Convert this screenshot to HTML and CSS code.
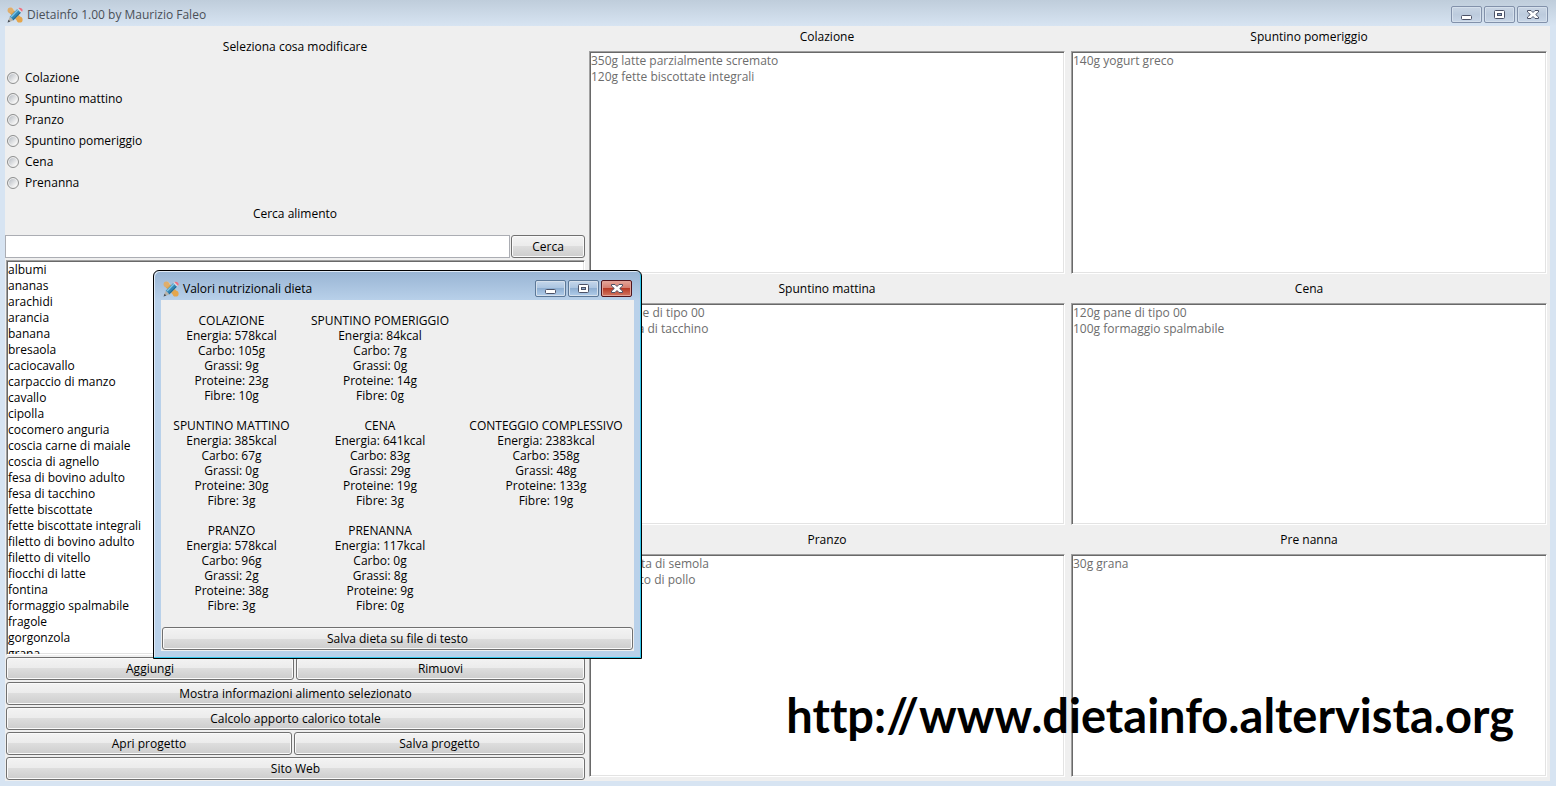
FILE: index.html
```html
<!DOCTYPE html>
<html lang="it">
<head>
<meta charset="utf-8">
<title>Dietainfo 1.00 by Maurizio Faleo</title>
<link rel="stylesheet" href="styles.css">
</head>
<body>
<svg class="defs" aria-hidden="true">
  <symbol id="app" viewBox="0 0 16 16">
    <path d="M.8 4.400 4.400.8 15.200 11.600 11.600 15.200Z" fill="#dda657"/>
    <path d="M4.400.8 7 3.400M5.800 3.600 4.800 4.600" stroke="#f3cd8b" fill="none"/>
    <circle cx="12.700" cy="12.700" r="2.900" fill="#e5a64c"/>
    <circle cx="3.300" cy="3.300" r="2.700" fill="#dfae6c"/>
    <path d="M2.700 9.700 10.300 2.100 14 5.800 6.400 13.400Z" fill="#3387b5"/>
    <path d="M4 10 11.200 2.800" stroke="#82c6e4" stroke-width="1.400"/>
    <path d="M5.900 12.800 13.400 5.300" stroke="#1d5f88"/>
    <path d="M2.700 9.700 6.400 13.400.6 15.400Z" fill="#b9b3aa"/>
    <path d="M1.500 12.800 3.300 14.600.6 15.400Z" fill="#464d55"/>
    <path d="M10.300 2.100 11.300 1.100 15 4.800 14 5.800Z" fill="#d9dde2"/>
    <path d="M11.300 1.100Q13 0 14.700 1.500T15 4.800Z" fill="#f0707f"/>
  </symbol>
  <symbol id="min" viewBox="0 0 12 10"><rect x="0.500" y="5.500" width="10" height="4" rx="1" fill="#fff" stroke="#4b5166"/></symbol>
  <symbol id="max" viewBox="0 0 12 10"><rect x="0.500" y="0.500" width="10" height="8" rx="1" fill="#fff" stroke="#4b5166"/><rect x="3.500" y="3.500" width="4" height="2" fill="#8fa9c9" stroke="#4b5166"/></symbol>
  <symbol id="close" viewBox="0 0 12 10"><path d="M.5.5H4L6 2.500 8 .5H11.500V2L8.700 4.500 11.500 7V8.500H8L6 6.500 4 8.500H.5V7L3.300 4.500.5 2Z" fill="#fff" stroke="#4b5166"/></symbol>
</svg>
<div class="window">
  <header class="titlebar">
    <svg class="appicon"><use href="#app"/></svg>
    <h1 class="title">Dietainfo 1.00 by Maurizio Faleo</h1>
    <div class="controls">
      <button class="ctl" aria-label="Riduci"><svg><use href="#min"/></svg></button>
      <button class="ctl" aria-label="Ingrandisci"><svg><use href="#max"/></svg></button>
      <button class="ctl" aria-label="Chiudi"><svg><use href="#close"/></svg></button>
    </div>
  </header>
  <main class="client">
    <section class="side">
      <h2 class="heading">Seleziona cosa modificare</h2>
      <div class="radios">
        <label class="radio"><input type="radio" name="pasto">Colazione</label>
        <label class="radio"><input type="radio" name="pasto">Spuntino mattino</label>
        <label class="radio"><input type="radio" name="pasto">Pranzo</label>
        <label class="radio"><input type="radio" name="pasto">Spuntino pomeriggio</label>
        <label class="radio"><input type="radio" name="pasto">Cena</label>
        <label class="radio"><input type="radio" name="pasto">Prenanna</label>
      </div>
      <label class="heading" for="cerca">Cerca alimento</label>
      <div class="search"><input class="field" id="cerca" type="text"><button class="btn">Cerca</button></div>
      <div class="listwrap">
        <ul class="box list">
          <li>albumi</li><li>ananas</li><li>arachidi</li><li>arancia</li><li>banana</li><li>bresaola</li><li>caciocavallo</li><li>carpaccio di manzo</li><li>cavallo</li><li>cipolla</li><li>cocomero anguria</li><li>coscia carne di maiale</li><li>coscia di agnello</li><li>fesa di bovino adulto</li><li>fesa di tacchino</li><li>fette biscottate</li><li>fette biscottate integrali</li><li>filetto di bovino adulto</li><li>filetto di vitello</li><li>fiocchi di latte</li><li>fontina</li><li>formaggio spalmabile</li><li>fragole</li><li>gorgonzola</li><li>grana</li>
        </ul>
      </div>
      <div class="actions">
        <div class="pair"><button class="btn">Aggiungi</button><button class="btn">Rimuovi</button></div>
        <button class="btn">Mostra informazioni alimento selezionato</button>
        <button class="btn">Calcolo apporto calorico totale</button>
        <div class="pair project"><button class="btn">Apri progetto</button><button class="btn">Salva progetto</button></div>
        <button class="btn">Sito Web</button>
      </div>
    </section>
    <section class="meals">
      <div class="meal"><h2>Colazione</h2><ul class="box"><li>350g latte parzialmente scremato</li><li>120g fette biscottate integrali</li></ul></div>
      <div class="meal"><h2>Spuntino pomeriggio</h2><ul class="box"><li>140g yogurt greco</li></ul></div>
      <div class="meal"><h2>Spuntino mattina</h2><ul class="box"><li>120g pane di tipo 00</li><li>100g fesa di tacchino</li></ul></div>
      <div class="meal"><h2>Cena</h2><ul class="box"><li>120g pane di tipo 00</li><li>100g formaggio spalmabile</li></ul></div>
      <div class="meal"><h2>Pranzo</h2><ul class="box"><li>120g pasta di semola</li><li>150g petto di pollo</li></ul></div>
      <div class="meal"><h2>Pre nanna</h2><ul class="box"><li>30g grana</li></ul></div>
    </section>
  </main>
  <p class="site">http://www.dietainfo.altervista.org</p>
  <section class="dialog" role="dialog" aria-labelledby="dlg">
    <header class="dialogbar">
      <svg class="appicon"><use href="#app"/></svg>
      <h2 class="title" id="dlg">Valori nutrizionali dieta</h2>
      <div class="controls">
        <button class="ctl" aria-label="Riduci"><svg><use href="#min"/></svg></button>
        <button class="ctl" aria-label="Ingrandisci"><svg><use href="#max"/></svg></button>
        <button class="ctl red" aria-label="Chiudi"><svg><use href="#close"/></svg></button>
      </div>
    </header>
    <div class="dialogbody">
      <div class="values">
        <div class="value"><h3>COLAZIONE</h3><p>Energia: 578kcal</p><p>Carbo: 105g</p><p>Grassi: 9g</p><p>Proteine: 23g</p><p>Fibre: 10g</p></div>
        <div class="value"><h3>SPUNTINO POMERIGGIO</h3><p>Energia: 84kcal</p><p>Carbo: 7g</p><p>Grassi: 0g</p><p>Proteine: 14g</p><p>Fibre: 0g</p></div>
        <div class="value first"><h3>SPUNTINO MATTINO</h3><p>Energia: 385kcal</p><p>Carbo: 67g</p><p>Grassi: 0g</p><p>Proteine: 30g</p><p>Fibre: 3g</p></div>
        <div class="value"><h3>CENA</h3><p>Energia: 641kcal</p><p>Carbo: 83g</p><p>Grassi: 29g</p><p>Proteine: 19g</p><p>Fibre: 3g</p></div>
        <div class="value"><h3>CONTEGGIO COMPLESSIVO</h3><p>Energia: 2383kcal</p><p>Carbo: 358g</p><p>Grassi: 48g</p><p>Proteine: 133g</p><p>Fibre: 19g</p></div>
        <div class="value first"><h3>PRANZO</h3><p>Energia: 578kcal</p><p>Carbo: 96g</p><p>Grassi: 2g</p><p>Proteine: 38g</p><p>Fibre: 3g</p></div>
        <div class="value"><h3>PRENANNA</h3><p>Energia: 117kcal</p><p>Carbo: 0g</p><p>Grassi: 8g</p><p>Proteine: 9g</p><p>Fibre: 0g</p></div>
      </div>
      <button class="btn">Salva dieta su file di testo</button>
    </div>
  </section>
</div>
</body>
</html>
```
FILE: styles.css
```css
* { box-sizing: border-box; margin: 0; padding: 0; }
body, button, input { font: 12px/16px "Open Sans", "Noto Sans", sans-serif; color: #000; }
h1, h2, h3 { font-size: 12px; font-weight: 400; }
ul { list-style: none; }
.defs { position: absolute; width: 0; height: 0; }

.window {
  position: relative;
  display: flex;
  flex-direction: column;
  height: 100vh;
  padding: 0 6px 5px 5px;
  overflow: hidden;
  background: linear-gradient(#bfcddb, #d7e4f2 26px);
}
.titlebar { display: flex; align-items: center; flex: none; height: 26px; padding: 3px 2px 0 2px; }
.titlebar .title { color: #4a5058; }
.appicon { width: 16px; height: 16px; margin-right: 4px; }
.controls { display: flex; gap: 2px; margin-left: auto; }
.ctl {
  display: flex;
  align-items: center;
  justify-content: center;
  width: 31px;
  height: 17px;
  border: 1px solid #8291aa;
  border-radius: 2px;
  background: linear-gradient(#c9d5e4, #bccbdd 50%, #c8d6e7);
  box-shadow: inset 0 0 0 1px #d5e0ec;
}
.ctl svg { width: 12px; height: 10px; }

.client { display: flex; flex: 1; gap: 4px; min-height: 0; background: #efefef; }
.side { display: flex; flex-direction: column; flex: 0 1 580px; min-width: 0; }
.heading { display: block; height: 41px; flex: none; line-height: 41px; text-align: center; }
.radios { flex: none; }
.radio { display: flex; align-items: center; gap: 6px; height: 21px; padding-left: 2px; }
.radio input {
  appearance: none;
  width: 12px;
  height: 12px;
  border: 1px solid #8e8f8f;
  border-radius: 50%;
  background: linear-gradient(135deg, #aeb4bc, #f4f4f4 75%);
  box-shadow: inset 0 0 0 1px #f1f1f1;
}
.search { display: grid; grid-template-columns: 1fr 74px; gap: 1px; margin-top: 1px; flex: none; }
.field { height: 23px; min-width: 0; padding: 0 4px; border: 1px solid #abadb3; background: #fff; }
.btn {
  height: 23px;
  min-width: 0;
  border: 1px solid #707070;
  border-radius: 3px;
  background: linear-gradient(#f3f3f3, #ebebeb 50%, #dddddd 50%, #cdcdcd);
  box-shadow: inset 0 0 0 1px #fafafa;
}
.listwrap { display: flex; flex: 1; min-height: 0; padding: 2px 0 2px 1px; }
.box {
  flex: 1;
  min-height: 0;
  padding: 1px;
  overflow: hidden;
  border: 1px solid;
  border-color: #a0a0a0 #fff #fff #a0a0a0;
  background: #fff;
  box-shadow: inset 1px 1px #696969, inset -1px -1px #e3e3e3;
  color: #6d6d6d;
  white-space: nowrap;
}
.list { color: #000; }
.actions { display: flex; flex-direction: column; gap: 2px; flex: none; padding: 0 0 1px 1px; }
.pair { display: grid; grid-template-columns: 288fr 289fr; gap: 2px; }
.project { grid-template-columns: 286fr 291fr; }

.meals { display: grid; grid-template: repeat(3, 1fr) / 1fr 1fr; gap: 0 6px; flex: 1; min-width: 0; padding-right: 3px; }
.meal { display: flex; flex-direction: column; min-width: 0; min-height: 0; padding-bottom: 4px; }
.meal h2 { height: 25px; flex: none; line-height: 22px; text-align: center; }

.site {
  position: absolute;
  right: 42px;
  bottom: 41px;
  font: 700 47px/60px Lato, sans-serif;
  font-variant-ligatures: none;
  white-space: nowrap;
}

.dialog {
  position: absolute;
  left: 153px;
  top: 270px;
  width: 489px;
  padding: 0 6px 7px;
  border: 1px solid #000;
  border-radius: 6px 6px 0 0;
  background: linear-gradient(#98b4d3, #b9d1ea 30px);
  box-shadow: inset -1px -1px #33c6ea, inset 1px 1px #dfeaf6;
}
.dialogbar { display: flex; align-items: center; height: 29px; padding: 6px 3px 0 3px; }
.dialogbar .ctl { border-color: #5c7898; background: linear-gradient(#c5d7eb, #a9c3e0 50%, #8fafd2 50%, #b1cdea); }
.dialogbar .red { border-color: #50141c; background: linear-gradient(#e6a69a, #d3796b 50%, #b83a26 50%, #d27661); box-shadow: inset 0 0 0 1px #e1a398; }
.dialogbody { display: flex; flex-direction: column; padding: 13px 1px 1px; margin: 0 1px; background: #efefef; }
.values { display: grid; grid-template-columns: 139fr 158fr 174fr; row-gap: 15px; margin-bottom: 14px; }
.value { line-height: 15px; text-align: center; white-space: nowrap; }
.first { grid-column: 1; }
```
